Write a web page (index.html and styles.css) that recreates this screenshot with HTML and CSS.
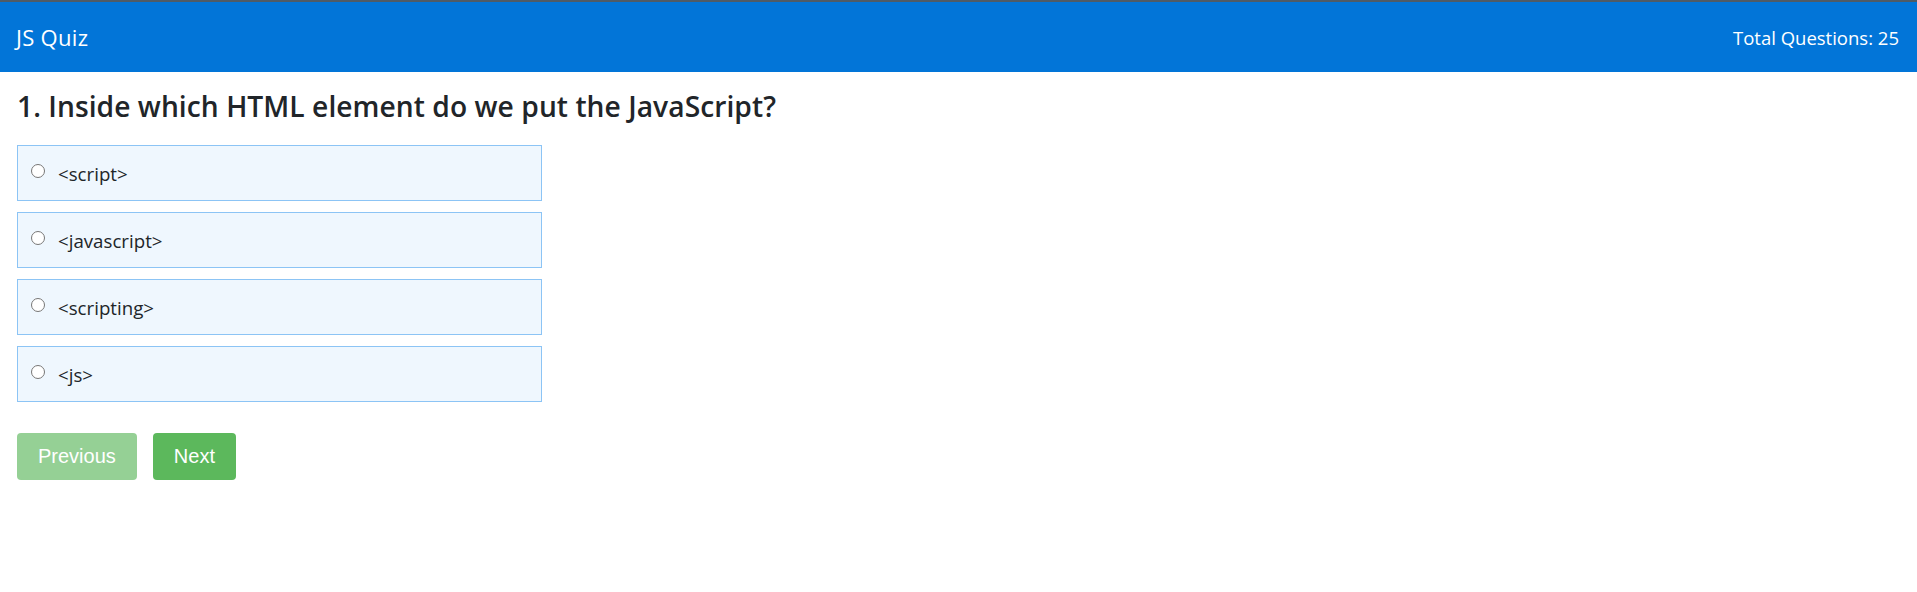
FILE: index.html
```html
<!DOCTYPE html>
<html lang="en">
<head>
<meta charset="utf-8">
<title>JS Quiz</title>
<link rel="stylesheet" href="styles.css">
</head>
<body>
<header class="topbar">
  <div class="brand">JS Quiz</div>
  <div class="total">Total Questions: 25</div>
</header>
<main class="quiz">
  <h2 class="question">1. Inside which HTML element do we put the JavaScript?</h2>
  <ul class="options">
    <li class="option"><label><input type="radio" name="q1"><span>&lt;script&gt;</span></label></li>
    <li class="option"><label><input type="radio" name="q1"><span>&lt;javascript&gt;</span></label></li>
    <li class="option"><label><input type="radio" name="q1"><span>&lt;scripting&gt;</span></label></li>
    <li class="option"><label><input type="radio" name="q1"><span>&lt;js&gt;</span></label></li>
  </ul>
  <div class="actions">
    <button class="btn btn-disabled" disabled>Previous</button>
    <button class="btn">Next</button>
  </div>
</main>
</body>
</html>
```
FILE: styles.css
```css
html, body {
  margin: 0;
  padding: 0;
  background: #ffffff;
}
body {
  font-family: "Open Sans", "Noto Sans", sans-serif;
  color: #212529;
}
.topbar {
  box-sizing: border-box;
  height: 72px;
  border-top: 2px solid #4f5b66;
  background: #0275d8;
  color: #ffffff;
  display: flex;
  align-items: center;
  justify-content: space-between;
  padding: 0 18px 0 16px;
}
.brand {
  font-size: 22px;
  letter-spacing: 0.3px;
}
.total {
  font-size: 18.5px;
}
.quiz {
  padding: 0 17px;
}
.question {
  margin: 15px 0 20px;
  font-size: 28.2px;
  font-weight: 600;
  line-height: 38px;
  letter-spacing: 0.05px;
  color: #212529;
}
.options {
  list-style: none;
  margin: 0;
  padding: 0;
  width: 525px;
  display: flex;
  flex-direction: column;
  gap: 11px;
}
.option {
  box-sizing: border-box;
  height: 56px;
  border: 1px solid #8cc4f5;
  background: #eff7fe;
  display: flex;
  align-items: center;
  padding: 0 13px;
}
.option label {
  display: flex;
  align-items: center;
  gap: 13px;
  font-size: 18.7px;
  color: #212529;
}
.option input {
  margin: 0;
  width: 14px;
  height: 14px;
  position: relative;
  top: -2px;
}
.actions {
  display: flex;
  gap: 16px;
  margin-top: 31px;
}
.btn {
  font-family: "Liberation Sans", Arial, sans-serif;
  font-size: 20px;
  color: #ffffff;
  background: #5cb85c;
  border: none;
  border-radius: 4px;
  height: 47px;
  padding: 0 21px;
}
.btn-disabled {
  background: #95d095;
}
```
